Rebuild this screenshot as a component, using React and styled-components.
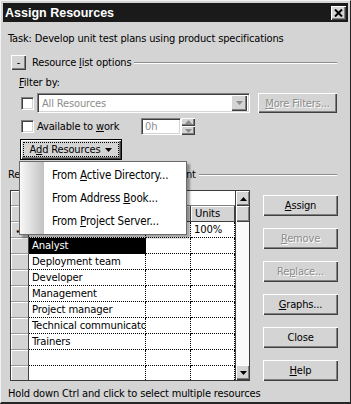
import React from 'react';
import styled, { createGlobalStyle } from 'styled-components';

const GlobalStyle = createGlobalStyle`
  html, body {
    margin: 0;
    padding: 0;
    background: #d4d4d4;
  }
  body {
    font-family: "DejaVu Sans Condensed", "Liberation Sans", sans-serif;
    font-size: 11px;
    letter-spacing: -0.15px;
    color: #000;
  }
`;

const Window = styled.div`
  width: 351px;
  height: 404px;
  box-sizing: border-box;
  padding: 2px 2px 0 2px;
  background: #d4d4d4;
  border-top: 1px solid #f2f2f2;
  border-left: 1px solid #f2f2f2;
  border-right: 1px solid #262626;
  border-bottom: 2px solid #262626;
  display: flex;
  flex-direction: column;
  overflow: hidden;
`;

const TitleBar = styled.div`
  height: 19px;
  flex-shrink: 0;
  background: #1a1a1a;
  display: flex;
  align-items: center;
  justify-content: space-between;
  padding: 0 2px 0 2px;
`;

const Title = styled.span`
  color: #fff;
  font-family: "Liberation Sans", Arial, sans-serif;
  font-weight: bold;
  font-size: 12.5px;
  letter-spacing: 0;
`;

const CloseBox = styled.div`
  width: 15px;
  height: 14px;
  background: #d4d4d4;
  box-shadow: inset 1px 1px #fff, inset -1px -1px #404040, inset -2px -2px #808080;
  display: flex;
  align-items: center;
  justify-content: center;
`;

const Content = styled.div`
  display: flex;
  flex-direction: column;
  padding: 0 10px 0 5px;
`;

const U = styled.span`
  text-decoration: underline;
`;

const TaskLine = styled.div`
  margin-top: 10px;
  line-height: 14px;
`;

const SectionHead = styled.div`
  margin-top: 9px;
  height: 15px;
  display: flex;
  align-items: center;
`;

const Raised = styled.div`
  background: #d4d4d4;
  box-shadow: inset 1px 1px #fff, inset -1px -1px #404040, inset -2px -2px #808080;
  display: flex;
  align-items: center;
  justify-content: center;
  box-sizing: border-box;
`;

const Toggle = styled(Raised)`
  width: 15px;
  height: 15px;
  margin-left: 3px;
  line-height: 1;
`;

const HeadLabel = styled.span`
  margin-left: ${p => p.$gap || 0}px;
  white-space: nowrap;
`;

const Rule = styled.div`
  flex: 1;
  height: 0;
  border-top: 1px solid #8c8c8c;
  border-bottom: 1px solid #fff;
  margin: 0 1px 0 3px;
`;

const FilterLabel = styled.div`
  margin: 6px 0 0 11px;
  line-height: 13px;
`;

const Row = styled.div`
  display: flex;
  align-items: center;
  padding-left: 13px;
  height: ${p => p.$h}px;
  margin-top: ${p => p.$mt}px;
`;

const Check = styled.div`
  width: 13px;
  height: 13px;
  box-sizing: border-box;
  background: #fff;
  border-top: 1px solid #808080;
  border-left: 1px solid #808080;
  border-right: 1px solid #fff;
  border-bottom: 1px solid #fff;
  box-shadow: inset 1px 1px #404040, inset -1px -1px #d4d4d4;
  flex-shrink: 0;
`;

const Sunken = styled.div`
  box-sizing: border-box;
  background: ${p => p.$bg || '#fff'};
  border-top: 1px solid #808080;
  border-left: 1px solid #808080;
  border-right: 1px solid #fff;
  border-bottom: 1px solid #fff;
  box-shadow: inset 1px 1px #404040, inset -1px -1px #d4d4d4;
  display: flex;
  align-items: center;
`;

const Combo = styled(Sunken)`
  margin-left: 3px;
  width: 213px;
  height: 20px;
  padding: 2px 2px 2px 4px;
  color: #8c8c8c;
  justify-content: space-between;
`;

const ArrowBtn = styled(Raised)`
  width: ${p => p.$w}px;
  height: ${p => p.$h}px;
  flex-shrink: 0;
`;

const Button = styled(Raised)`
  width: ${p => p.$w}px;
  height: ${p => p.$h || 21}px;
  margin-left: ${p => p.$ml || 0}px;
  color: ${p => (p.$disabled ? '#8c8c8c' : '#000')};
  text-shadow: ${p => (p.$disabled ? '1px 1px #fff' : 'none')};
  white-space: nowrap;
  flex-shrink: 0;
`;

const AvailLabel = styled.span`
  margin-left: 3px;
  width: 104px;
`;

const Spin = styled.div`
  display: flex;
  height: 17px;
`;

const SpinField = styled(Sunken)`
  width: 40px;
  height: 17px;
  padding-left: 3px;
  color: #8c8c8c;
`;

const SpinArrows = styled.div`
  display: flex;
  flex-direction: column;
  width: 14px;
`;

const AddWrap = styled.div`
  position: relative;
  margin: 4px 0 0 12px;
  align-self: flex-start;
`;

const AddButton = styled.div`
  width: 102px;
  height: 21px;
  box-sizing: border-box;
  border: 1px solid #000;
  background: #d4d4d4;
  box-shadow: inset 1px 1px #fff, inset -1px -1px #404040, inset -2px -2px #808080;
  display: flex;
  align-items: center;
  justify-content: center;
  padding: 3px;
`;

const Focus = styled.div`
  flex: 1;
  align-self: stretch;
  outline: 1px dotted #000;
  display: flex;
  align-items: center;
  justify-content: center;
  gap: 5px;
`;

const Menu = styled.div`
  position: absolute;
  top: 22px;
  left: -1px;
  width: 168px;
  box-sizing: border-box;
  background: #fff;
  border: 1px solid #6a6a6a;
  padding: 2px 0 1px;
  box-shadow: 3px 3px 2px rgba(0, 0, 0, 0.35);
  z-index: 5;
`;

const Gutter = styled.div`
  position: absolute;
  top: 0;
  bottom: 0;
  left: 0;
  width: 24px;
  background: linear-gradient(to right, #f8f8f8, #c2c2c2);
`;

const MenuItem = styled.div`
  position: relative;
  height: 23px;
  line-height: 23px;
  padding-left: 32px;
  font-size: 11.5px;
  white-space: nowrap;
`;

const GroupRow = styled.div`
  margin-top: 8px;
  height: 13px;
  display: flex;
  align-items: center;
`;

const Main = styled.div`
  margin-top: 9px;
  display: flex;
  align-items: flex-start;
`;

const Grid = styled.div`
  margin-left: 2px;
  width: 240px;
  height: 191px;
  box-sizing: border-box;
  border: 1px solid #3a3a3a;
  display: flex;
  overflow: hidden;
  background: #fff;
`;

const Table = styled.div`
  width: 224px;
  display: flex;
  flex-direction: column;
`;

const GRow = styled.div`
  display: flex;
  height: ${p => p.$h || 16}px;
  flex-shrink: 0;
`;

const Selector = styled.div`
  width: 18px;
  box-sizing: border-box;
  background: #d4d4d4;
  border-right: 1px solid #404040;
  border-bottom: 1px solid #9a9a9a;
  box-shadow: inset 1px 1px #fff;
  font-size: 12px;
  display: flex;
  align-items: center;
  justify-content: center;
  flex-shrink: 0;
`;

const Cell = styled.div`
  width: ${p => p.$w}px;
  box-sizing: border-box;
  border-right: 1px dotted #000;
  border-bottom: 1px dotted #000;
  padding-left: 3px;
  display: flex;
  align-items: center;
  white-space: nowrap;
  overflow: hidden;
  font-size: 11.2px;
  background: ${p => (p.$sel ? '#000' : '#fff')};
  color: ${p => (p.$sel ? '#fff' : '#000')};
  flex-shrink: 0;
`;

const HeadCell = styled.div`
  width: ${p => p.$w}px;
  box-sizing: border-box;
  background: #d4d4d4;
  border-right: 1px solid #404040;
  border-bottom: 1px solid #404040;
  box-shadow: inset 1px 1px #fff;
  padding-left: 4px;
  display: flex;
  align-items: center;
  font-size: 11.2px;
  white-space: nowrap;
  overflow: hidden;
  flex-shrink: 0;
`;

const EntryCell = styled.div`
  flex: 1;
  background: #fff;
  border-bottom: 1px solid #808080;
`;

const ScrollBar = styled.div`
  width: 14px;
  display: flex;
  flex-direction: column;
  background: #f0f0f0;
  border-left: 1px solid #404040;
`;

const Track = styled.div`
  flex: 1;
  background: #fafafa;
`;

const ButtonCol = styled.div`
  margin-left: 13px;
  padding-top: 5px;
  display: flex;
  flex-direction: column;
  gap: 12px;
`;

const Footer = styled.div`
  margin-top: 6px;
  line-height: 13px;
  white-space: nowrap;
`;

const Tri = ({ up, color = '#000' }) => (
  <svg width="7" height="4" viewBox="0 0 7 4">
    <polygon points={up ? '0,4 7,4 3.5,0' : '0,0 7,0 3.5,4'} fill={color} />
  </svg>
);

const rows = [
  { name: 'Testers', units: '100%', check: true },
  { name: 'Analyst', sel: true },
  { name: 'Deployment team' },
  { name: 'Developer' },
  { name: 'Management' },
  { name: 'Project manager' },
  { name: 'Technical communicator' },
  { name: 'Trainers' },
  { name: '' },
  { name: '' },
];

export default function App() {
  return (
    <>
      <GlobalStyle />
      <Window>
        <TitleBar>
          <Title>Assign Resources</Title>
          <CloseBox>
            <svg width="9" height="8" viewBox="0 0 9 8">
              <path d="M1 0.5 L8 7.5 M8 0.5 L1 7.5" stroke="#000" strokeWidth="2" />
            </svg>
          </CloseBox>
        </TitleBar>
        <Content>
          <TaskLine>Task: Develop unit test plans using product specifications</TaskLine>
          <SectionHead>
            <Toggle>-</Toggle>
            <HeadLabel $gap={6}>Resource <U>l</U>ist options</HeadLabel>
            <Rule />
          </SectionHead>
          <FilterLabel><U>F</U>ilter by:</FilterLabel>
          <Row $h={20} $mt={4}>
            <Check />
            <Combo>
              <span>All Resources</span>
              <ArrowBtn $w={16} $h={16}><Tri color="#8c8c8c" /></ArrowBtn>
            </Combo>
            <Button $w={79} $h={20} $ml={8} $disabled><span><U>M</U>ore Filters...</span></Button>
          </Row>
          <Row $h={17} $mt={5}>
            <Check />
            <AvailLabel>Available to <U>w</U>ork</AvailLabel>
            <Spin>
              <SpinField>0h</SpinField>
              <SpinArrows>
                <ArrowBtn $w={14} $h={8}><Tri up color="#8c8c8c" /></ArrowBtn>
                <ArrowBtn $w={14} $h={9}><Tri color="#8c8c8c" /></ArrowBtn>
              </SpinArrows>
            </Spin>
          </Row>
          <AddWrap>
            <AddButton>
              <Focus>
                <span>A<U>d</U>d Resources</span>
                <Tri />
              </Focus>
            </AddButton>
            <Menu>
              <Gutter />
              <MenuItem>From <U>A</U>ctive Directory...</MenuItem>
              <MenuItem>From Address <U>B</U>ook...</MenuItem>
              <MenuItem>From <U>P</U>roject Server...</MenuItem>
            </Menu>
          </AddWrap>
          <GroupRow>
            <HeadLabel>Resources from Software Development</HeadLabel>
            <Rule />
          </GroupRow>
          <Main>
            <Grid>
              <Table>
                <GRow $h={15}>
                  <Selector />
                  <EntryCell />
                </GRow>
                <GRow>
                  <Selector />
                  <HeadCell $w={117}>Resource Name</HeadCell>
                  <HeadCell $w={45}>R/D</HeadCell>
                  <HeadCell $w={44}>Units</HeadCell>
                </GRow>
                {rows.map((r, i) => (
                  <GRow key={i}>
                    <Selector>{r.check ? '✓' : ''}</Selector>
                    <Cell $w={117} $sel={r.sel}>{r.name}</Cell>
                    <Cell $w={45} />
                    <Cell $w={44}>{r.units || ''}</Cell>
                  </GRow>
                ))}
              </Table>
              <ScrollBar>
                <ArrowBtn $w={14} $h={15}><Tri up /></ArrowBtn>
                <ArrowBtn $w={14} $h={16} />
                <Track />
                <ArrowBtn $w={14} $h={15}><Tri /></ArrowBtn>
              </ScrollBar>
            </Grid>
            <ButtonCol>
              <Button $w={75}><span><U>A</U>ssign</span></Button>
              <Button $w={75} $disabled><span><U>R</U>emove</span></Button>
              <Button $w={75} $disabled><span>Re<U>p</U>lace...</span></Button>
              <Button $w={75}><span><U>G</U>raphs...</span></Button>
              <Button $w={75}>Close</Button>
              <Button $w={75}><span><U>H</U>elp</span></Button>
            </ButtonCol>
          </Main>
          <Footer>Hold down Ctrl and click to select multiple resources</Footer>
        </Content>
      </Window>
    </>
  );
}
